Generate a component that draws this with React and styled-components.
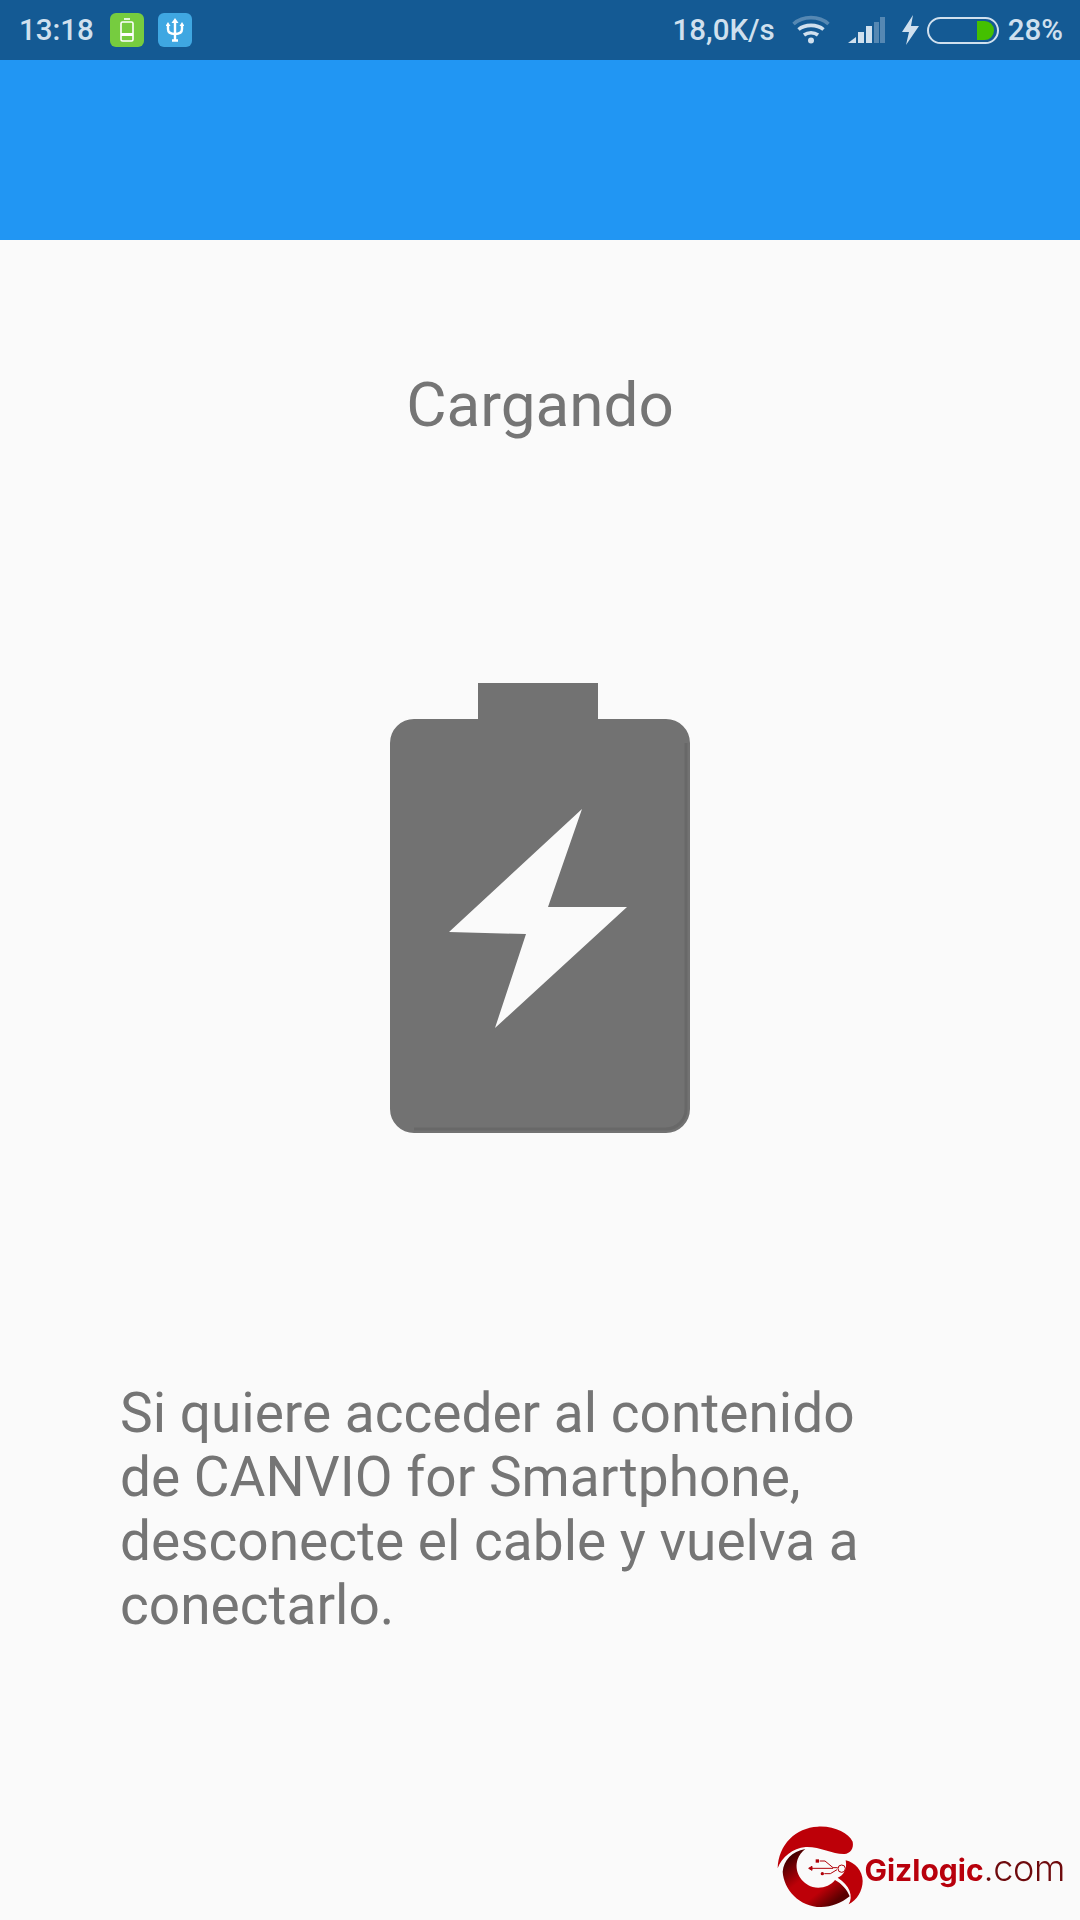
import React from "react";
import styled, { createGlobalStyle } from "styled-components";

const Global = createGlobalStyle`
  html, body { margin: 0; padding: 0; background: #fafafa; }
  * { box-sizing: border-box; }
`;

const Screen = styled.div`
  width: 1080px; height: 1920px; display: flex; flex-direction: column;
  background: #fafafa; font-family: Roboto, "Liberation Sans", sans-serif; overflow: hidden;
`;
const StatusBar = styled.div`
  height: 60px; background: #145a94; display: flex; align-items: center;
  justify-content: space-between; padding: 0 17px 0 19px; color: #d0e0ee;
  font-size: 29.5px; font-weight: 500;
`;
const Group = styled.div`display: flex; align-items: center;`;
const Time = styled.span`width: 91px;`;
const Tile = styled.div`
  width: 34px; height: 34px; border-radius: 6px; background: ${p => p.$bg};
  display: flex; align-items: center; justify-content: center; margin-right: ${p => p.$mr || 0}px;
`;
const Speed = styled.span`margin-right: 17px;`;
const Icon = styled.svg`display: block; flex: none; margin-right: ${p => p.$mr || 0}px;`;
const AppBar = styled.div`height: 180px; background: #2196f3;`;
const Content = styled.main`flex: 1; display: flex; flex-direction: column; align-items: center; color: #757575;`;
const Title = styled.h1`
  margin: 126px 0 0; font-size: 62px; line-height: 78px; font-weight: 400; text-align: center;
`;
const BatteryArt = styled.svg`display: block; margin-top: 239px; filter: blur(0.6px);`;
const Message = styled.p`
  align-self: flex-start; margin: 248px 0 0 120px; width: 760px;
  font-size: 55px; line-height: 64px; font-weight: 400;
`;
const Footer = styled.footer`
  margin-top: auto; align-self: stretch; height: 110px; padding: 6px 15px 0 0;
  display: flex; justify-content: flex-end; align-items: center;
`;
const Mark = styled.svg`display: block; flex: none; margin-right: -2px;`;
const Brand = styled.div`
  font-family: Inter, "Open Sans", sans-serif; font-size: 30px; font-weight: 700;
  color: #b8000c; white-space: nowrap; filter: blur(0.4px);
  span { font-size: 36px; font-weight: 300; color: #6e0a0d; letter-spacing: -0.4px; }
`;

const Wifi = () => (
  <Icon $mr={18} width="38" height="30" viewBox="0 0 38 30" fill="none" stroke="#d0e0ee" strokeWidth="3.6">
    <path d="M1.5 9 C11 0.5 27 0.5 36.5 9" opacity=".35" />
    <path d="M6.5 14.5 C13 9 25 9 31.5 14.5" />
    <path d="M12 20 C16 17 22 17 26 20" />
    <circle cx="19" cy="25.5" r="3" fill="#d0e0ee" stroke="none" />
  </Icon>
);
const Signal = () => (
  <Icon $mr={17} width="37" height="26" viewBox="0 0 37 26" fill="#d0e0ee">
    <path d="M0 26 L8 20 V26Z" />
    <rect x="10" y="15" width="6" height="11" />
    <rect x="18" y="9" width="6" height="17" />
    <rect x="26" y="5" width="5" height="21" opacity=".35" />
    <rect x="32" y="0" width="5" height="26" opacity=".35" />
  </Icon>
);
const SmallBolt = () => (
  <Icon $mr={8} width="17" height="30" viewBox="0 0 17 30" fill="#d0e0ee">
    <path d="M11 0 L0 17 H7 L4 30 L17 11 H9Z" />
  </Icon>
);
const StatusBattery = () => (
  <Icon $mr={9} width="72" height="27" viewBox="0 0 72 27">
    <rect x="1" y="1" width="70" height="25" rx="12.5" fill="none" stroke="#d0e0ee" strokeWidth="2" />
    <path d="M50 4 H57 A9.5 9.5 0 0 1 67 13.5 A9.5 9.5 0 0 1 57 23 H50Z" fill="#44c000" />
  </Icon>
);

export default function App() {
  return (
    <Screen>
      <Global />
      <StatusBar>
        <Group>
          <Time>13:18</Time>
          <Tile $bg="#76cc3f" $mr={14}>
            <svg width="16" height="24" viewBox="0 0 16 24" fill="none" stroke="#fff" strokeWidth="1.6">
              <path d="M5 1 H11" />
              <rect x="2" y="4" width="12" height="19" rx="1.5" />
              <rect x="2" y="15" width="12" height="3" fill="#fff" stroke="none" />
            </svg>
          </Tile>
          <Tile $bg="#3fa7e2">
            <svg width="18" height="24" viewBox="0 0 18 24" fill="none" stroke="#fff" strokeWidth="2.4">
              <path d="M9 4 V23 M6 22.5 H12" />
              <path d="M2 7 V11 C2 14.5 5 16 9 16 C13 16 16 14.5 16 11 V7" />
              <path d="M9 0 L12.5 5 H5.5Z" fill="#fff" stroke="none" />
              <path d="M2 4 L4.5 8 H-.5Z M16 4 L18.5 8 H13.5Z" fill="#fff" stroke="none" />
            </svg>
          </Tile>
        </Group>
        <Group>
          <Speed>18,0K/s</Speed>
          <Wifi />
          <Signal />
          <SmallBolt />
          <StatusBattery />
          <span>28%</span>
        </Group>
      </StatusBar>
      <AppBar />
      <Content>
        <Title>Cargando</Title>
        <BatteryArt width="300" height="450" viewBox="0 0 300 450">
          <path fill="#727272" d="M88 0 H208 V36 H276 A24 24 0 0 1 300 60 V426 A24 24 0 0 1 276 450 H24 A24 24 0 0 1 0 426 V60 A24 24 0 0 1 24 36 H88Z" />
          <path fill="none" stroke="#686868" strokeWidth="3" d="M296 60 V426 A20 20 0 0 1 276 446 H24" />
          <path fill="#fafafa" d="M192 126 L158 224 L237 224 L105 345 L136 251 L59 249Z" />
        </BatteryArt>
        <Message>Si quiere acceder al contenido de CANVIO for Smartphone, desconecte el cable y vuelva a conectarlo.</Message>
        <Footer>
          <Mark width="95" height="95" viewBox="0 0 285 285">
            <defs>
              <linearGradient id="crescent" x1="0.25" y1="0" x2="0.95" y2="0.75">
                <stop offset="0" stopColor="#420000" />
                <stop offset="0.4" stopColor="#bd0008" />
                <stop offset="0.72" stopColor="#bd0008" />
                <stop offset="1" stopColor="#5a0000" />
              </linearGradient>
            </defs>
            <path fill="#bd0008" d="M245 62 C232 36 190 14 140 17 C75 20 22 70 20 142 C32 108 65 82 104 78 C145 76 185 100 220 99 C238 97 249 82 245 62Z" />
            <path fill="url(#crescent)" d="M103 84 C62 92 38 118 35 152 C38 205 85 258 150 258 C182 258 212 246 236 226 C228 205 212 188 192 177 C178 196 150 204 125 198 C90 188 68 150 80 115 C84 103 92 92 103 84Z" />
            <path fill="#bd0008" d="M224 118 C252 124 275 150 275 180 C275 208 258 238 233 250 C248 226 236 192 200 170 C216 165 230 145 224 118Z" />
            <g stroke="#b00008" strokeWidth="3" fill="none">
              <path d="M120 142 H186 M146 120 H162 L186 140 H200 M160 158 H178 L198 146" />
              <circle cx="212" cy="143" r="11" />
              <path d="M113 142 L123 136 V148Z" fill="#b00008" />
              <rect x="134" y="115" width="10" height="10" fill="#b00008" stroke="none" />
              <circle cx="154" cy="158" r="5" fill="#b00008" stroke="none" />
            </g>
          </Mark>
          <Brand>Gizlogic<span>.com</span></Brand>
        </Footer>
      </Content>
    </Screen>
  );
}
